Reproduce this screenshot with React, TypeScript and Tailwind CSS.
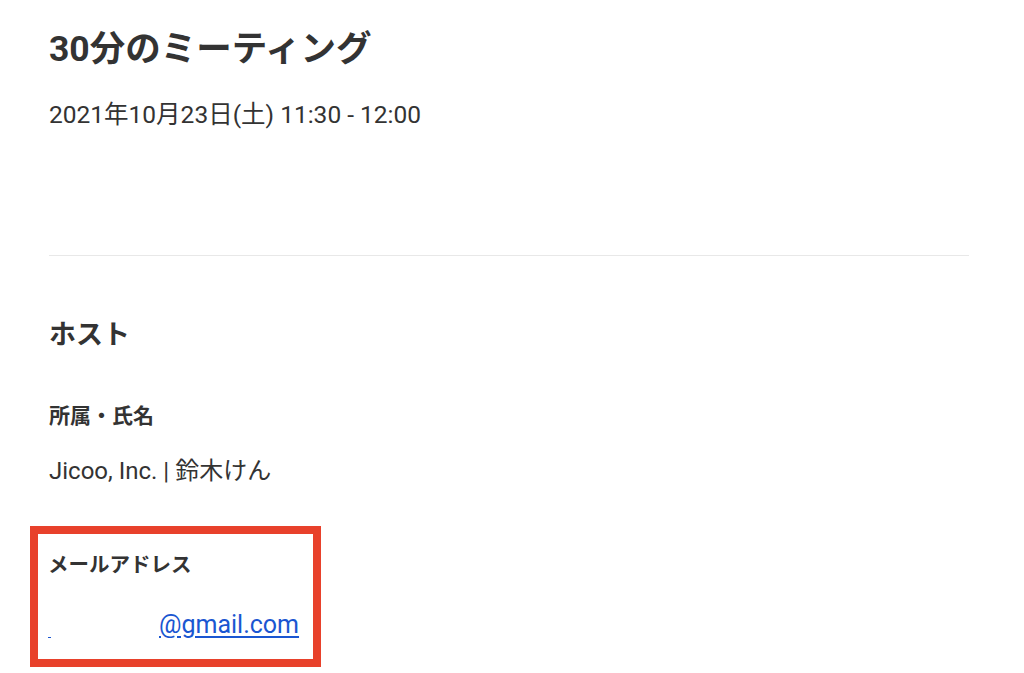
import React from "react";

export default function App() {
  return (
    <div
      className="min-h-[673px] w-[1024px] bg-white text-[#333333]"
      style={{ fontFamily: 'Roboto, "Noto Sans CJK JP", sans-serif' }}
    >
      <div className="ml-[49px] w-[920px] pt-[24px]">
        <h1 className="text-[35.5px] font-bold leading-[51px]">30分のミーティング</h1>
        <p className="mt-[22px] text-[24.5px] leading-[36px]">2021年10月23日(土) 11:30 - 12:00</p>
        <div className="mt-[122px] h-px w-full bg-[#e8e8e8]" />
        <h2 className="mt-[60px] text-[27px] font-bold leading-[39px]">ホスト</h2>
        <h3 className="mt-[46px] text-[21px] font-bold leading-[30px]">所属・氏名</h3>
        <p className="mt-[22px] text-[24px] leading-[36px]">Jicoo, Inc. | 鈴木けん</p>
        <div className="ml-[-19px] mt-[37px] w-[291px] border-[8px] border-[#e8412b] pb-[16px] pl-[10px] pt-[16px]">
          <h3 className="text-[20.5px] font-bold leading-[30px]">メールアドレス</h3>
          <div className="mt-[27px] flex items-end text-[25px] leading-[36px] text-[#1a56d1]">
            <span className="mb-[5px] h-px w-[3px] bg-[#1a56d1]" />
            <a href="#" className="ml-[108px] underline underline-offset-[3px]">@gmail.com</a>
          </div>
        </div>
      </div>
    </div>
  );
}
